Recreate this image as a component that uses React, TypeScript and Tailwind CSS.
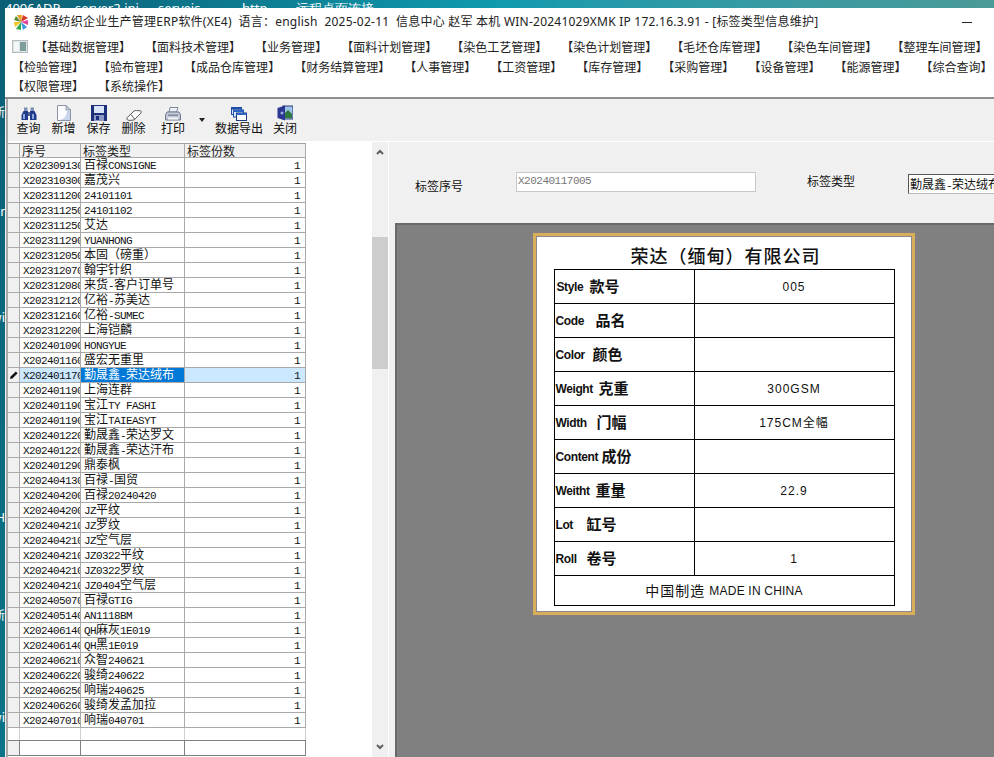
const CJK = '"Noto Sans CJK SC", sans-serif';

const rows: [string, string][] = [
  ["X202309130", "百禄CONSIGNE"],
  ["X202310300", "嘉茂兴"],
  ["X202311200", "24101101"],
  ["X202311250", "24101102"],
  ["X202311250", "艾达"],
  ["X202311290", "YUANHONG"],
  ["X202312050", "本固（磅重）"],
  ["X202312070", "翰宇针织"],
  ["X202312080", "来货-客户订单号"],
  ["X202312120", "亿裕-苏美达"],
  ["X202312160", "亿裕-SUMEC"],
  ["X202312200", "上海铠麟"],
  ["X202401090", "HONGYUE"],
  ["X202401160", "盛宏无重里"],
  ["X202401170", "勤晟鑫-荣达绒布"],
  ["X202401190", "上海连群"],
  ["X202401190", "宝江TY FASHI"],
  ["X202401190", "宝江TAIEASYT"],
  ["X202401220", "勤晟鑫-荣达罗文"],
  ["X202401220", "勤晟鑫-荣达汗布"],
  ["X202401290", "鼎泰枫"],
  ["X202404130", "百禄-国贸"],
  ["X202404200", "百禄20240420"],
  ["X202404200", "JZ平纹"],
  ["X202404210", "JZ罗纹"],
  ["X202404210", "JZ空气层"],
  ["X202404210", "JZ0322平纹"],
  ["X202404210", "JZ0322罗纹"],
  ["X202404210", "JZ0404空气层"],
  ["X202405070", "百禄GTIG"],
  ["X202405140", "AN1118BM"],
  ["X202406140", "QH麻灰1E019"],
  ["X202406140", "QH黑1E019"],
  ["X202406210", "众智240621"],
  ["X202406220", "骏绮240622"],
  ["X202406250", "响瑞240625"],
  ["X202406260", "骏绮发孟加拉"],
  ["X202407010", "响瑞040701"],
];

const menus = [
  "基础数据管理", "面料技术管理", "业务管理", "面料计划管理", "染色工艺管理", "染色计划管理",
  "毛坯仓库管理", "染色车间管理", "整理车间管理", "检验管理", "验布管理", "成品仓库管理",
  "财务结算管理", "人事管理", "工资管理", "库存管理", "采购管理", "设备管理", "能源管理",
  "综合查询", "权限管理", "系统操作",
];

const labelRows = [
  { en: "Style", cn: "款号", value: "005", w: "w-[34px] pl-px" },
  { en: "Code", cn: "品名", value: "", w: "w-[40px]" },
  { en: "Color", cn: "颜色", value: "", w: "w-[37px]" },
  { en: "Weight", cn: "克重", value: "300GSM", w: "w-[43px]" },
  { en: "Width", cn: "门幅", value: "175CM全幅", w: "w-[41px]" },
  { en: "Content", cn: "成份", value: "", w: "w-[46px]" },
  { en: "Weitht", cn: "重量", value: "22.9", w: "w-[40px]" },
  { en: "Lot", cn: "缸号", value: "", w: "w-[31px]" },
  { en: "Roll", cn: "卷号", value: "1", w: "w-[31px]" },
];

// grid text: SimSun look, half-width latin next to full-width hanzi
function Mixed({ text }: { text: string }) {
  const runs = text.match(/[\x00-\x7f]+|[^\x00-\x7f]+/g) ?? [];
  return (
    <>
      {runs.map((r, i) =>
        /^[\x00-\x7f]/.test(r) ? (
          <span key={i} className="font-['Liberation_Mono',monospace] text-[11px] tracking-[-0.6px]">{r}</span>
        ) : (
          <span key={i}>{r}</span>
        )
      )}
    </>
  );
}

function Logo() {
  return (
    <svg width="16" height="17" viewBox="0 0 16 17">
      <path d="M8 8 L4 1 L9 1 Z" fill="#e8a020" />
      <path d="M8 8 L10 1 L15 4 Z" fill="#d83a2a" />
      <path d="M8 8 L15 6 L15 11 Z" fill="#e0459a" />
      <path d="M8 8 L14 13 L10 16 Z" fill="#3a9ad8" />
      <path d="M8 8 L8 16 L3 15 Z" fill="#2fa84a" />
      <path d="M8 8 L2 13 L1 8 Z" fill="#f0c820" />
      <path d="M8 8 L1 6 L3 2 Z" fill="#5a8a30" />
    </svg>
  );
}

function MenuIcon() {
  return (
    <svg width="16" height="13" viewBox="0 0 16 13">
      <rect x="0.5" y="0.5" width="15" height="12" fill="#dfe6e6" stroke="#b4bebe" />
      <rect x="2" y="2" width="5" height="9" fill="#f4f8f8" />
      <rect x="8" y="2" width="6" height="9" fill="#7d9e9a" />
    </svg>
  );
}

function Binoculars() {
  return (
    <svg width="16" height="14" viewBox="0 0 16 14">
      <rect x="3" y="0.5" width="3.5" height="4" fill="#7d8fb5" />
      <rect x="9.5" y="0.5" width="3.5" height="4" fill="#7d8fb5" />
      <path d="M2.5 4 H7 V13 H0.5 V8 Z" fill="#1f3a8a" />
      <path d="M9 4 H13.5 L15.5 8 V13 H9 Z" fill="#1f3a8a" />
      <rect x="7" y="5" width="2" height="4" fill="#54658f" />
      <rect x="2" y="7" width="2" height="5" fill="#8fa6dd" />
      <rect x="11" y="7" width="2" height="5" fill="#8fa6dd" />
    </svg>
  );
}

function Doc() {
  return (
    <svg width="14" height="16" viewBox="0 0 14 16">
      <path d="M0.5 0.5 H9 L13.5 5 V15.5 H0.5 Z" fill="#fbfcff" stroke="#8a94a6" />
      <path d="M9 0.5 V5 H13.5 Z" fill="#d5dae8" stroke="#8a94a6" />
      <path d="M10 6 H13 V15 H3 Q10 13 10 6 Z" fill="#c9d3ea" />
    </svg>
  );
}

function Floppy() {
  return (
    <svg width="16" height="16" viewBox="0 0 16 16">
      <rect x="0" y="0" width="16" height="16" fill="#1c2f7a" />
      <rect x="3" y="1" width="10" height="7" fill="#dbe4f6" />
      <rect x="3" y="10" width="10" height="6" fill="#8d99c4" />
      <rect x="5" y="11" width="3" height="4" fill="#1c2f7a" />
    </svg>
  );
}

function Eraser() {
  return (
    <svg width="16" height="11" viewBox="0 0 16 11">
      <path d="M0.8 8 L8 1 Q9 0.3 10.5 0.6 L14.6 0.8 Q15.6 1.6 15 3 L8 10 L3 10.4 Q0.4 10 0.8 8 Z" fill="#fff" stroke="#5a5a5a" />
      <path d="M5 4.5 L8.5 9" stroke="#5a5a5a" fill="none" />
    </svg>
  );
}

function Printer() {
  return (
    <svg width="16" height="14" viewBox="0 0 16 14">
      <path d="M5 0.5 H13 L11.5 5 H4 Z" fill="#eef1f6" stroke="#7f8aa0" />
      <path d="M2 5 H14 L15.5 8 V13 H0.5 V8 Z" fill="#c3cad6" stroke="#6f7a90" />
      <rect x="3" y="7.5" width="10" height="1.5" fill="#7f8aa0" />
      <rect x="3" y="10.5" width="10" height="2" fill="#f4f6fa" />
    </svg>
  );
}

function ExportIcon() {
  return (
    <svg width="16" height="14" viewBox="0 0 16 14">
      <rect x="0.5" y="0.5" width="10" height="7" fill="#dbe8fb" stroke="#1f4fa8" />
      <rect x="0.5" y="0.5" width="10" height="2" fill="#1f4fa8" />
      <rect x="2.5" y="3" width="10" height="7" fill="#dbe8fb" stroke="#1f4fa8" />
      <rect x="2.5" y="3" width="10" height="2" fill="#2a64c8" />
      <rect x="5.5" y="6" width="10" height="7.5" fill="#fff" stroke="#1f3a7a" />
      <rect x="5.5" y="6" width="10" height="2" fill="#2a64c8" />
    </svg>
  );
}

function DoorIcon() {
  return (
    <svg width="16" height="16" viewBox="0 0 16 16">
      <rect x="6" y="1" width="10" height="13" fill="#9ec3e8" stroke="#2a3a7a" />
      <path d="M7 9 L11 5 L15 9 V13 H7 Z" fill="#2f7a3a" />
      <path d="M0.5 3 L8 0.5 V15.5 L0.5 13 Z" fill="#2a3690" />
      <rect x="3.5" y="7.5" width="3" height="1" fill="#c9d6f5" />
      <rect x="4.5" y="6.5" width="1" height="3" fill="#c9d6f5" />
    </svg>
  );
}

function Pencil() {
  return (
    <svg width="10" height="10" viewBox="0 0 10 10">
      <path d="M1 9 L1.6 6.6 L6.8 1.4 L8.6 3.2 L3.4 8.4 Z" fill="#111" />
    </svg>
  );
}

function ToolButton({ label, icon, w }: { label: string; icon: React.ReactNode; w: string }) {
  return (
    <div className={`flex flex-col items-center ${w}`}>
      <div className="flex h-[16px] items-end">{icon}</div>
      <span className="text-[12px] leading-[14px] text-[#111]">{label}</span>
    </div>
  );
}

function Chevron({ down }: { down?: boolean }) {
  return (
    <svg width="8" height="6" viewBox="0 0 8 6" className={down ? "rotate-180" : ""}>
      <path d="M1 5 L4 2 L7 5" fill="none" stroke="#606060" strokeWidth="2" />
    </svg>
  );
}

const gridCols = "grid grid-cols-[12px_61px_104px_121px]";
const cell = "overflow-hidden whitespace-nowrap border-r border-b border-[#a9a9a9]";

function DataGrid() {
  return (
    <div className="flex h-full w-[298px] flex-col">
      <div className={`${gridCols} h-[15px] border-t border-[#a0a0a0] bg-[#f1f1f1] text-[12px] leading-[13px] text-[#222]`}>
        <div className={cell} />
        <div className={`${cell} pl-[2px]`}>序号</div>
        <div className={`${cell} pl-[2px]`}>标签类型</div>
        <div className={`${cell} pl-[2px]`}>标签份数</div>
      </div>
      {rows.map(([id, name], i) => {
        const selected = i === 14;
        return (
          <div key={i} className={`${gridCols} h-[15px] text-[12px] leading-[11px] text-[#111]`}>
            <div className={`${cell} flex items-center justify-center bg-[#f0f0f0]`}>
              {selected && <Pencil />}
            </div>
            <div className={`${cell} pl-[3px] ${selected ? "bg-[#cce8ff]" : ""}`}>
              <Mixed text={id} />
            </div>
            <div className={`${cell} pl-[3px] ${selected ? "bg-[#0078d7] text-white" : ""}`}>
              <Mixed text={name} />
            </div>
            <div className={`${cell} pr-[5px] text-right ${selected ? "bg-[#cce8ff]" : ""}`}>
              <Mixed text="1" />
            </div>
          </div>
        );
      })}
      <div className={`${gridCols} h-[12px]`}>
        <div className="border-r border-[#d0d0d0]" />
        <div className="border-r border-[#d0d0d0]" />
        <div className="border-r border-[#d0d0d0]" />
        <div className="border-r border-[#d0d0d0]" />
      </div>
      <div className={`${gridCols} h-[16px] border-y border-[#808080]`}>
        <div className="border-r border-[#808080] bg-[#f0f0f0]" />
        <div className="border-r border-[#808080]" />
        <div className="border-r border-[#808080]" />
        <div className="border-r border-[#808080]" />
      </div>
    </div>
  );
}

function LabelCard() {
  return (
    <div className="flex h-[382px] w-[382px] flex-col items-center border-[3px] border-[#d8ae5a] bg-white pt-[6px] shadow-[inset_0_0_0_1px_#8a8a8a]">
      <div className="h-[27px] pl-[3px] text-[18px] font-medium leading-[26px] tracking-[1px] text-[#111]">
        荣达（缅甸）有限公司
      </div>
      <div className="flex w-[341px] flex-col border border-black">
        {labelRows.map((r) => (
          <div key={r.en} className="flex h-[34px] border-b border-black">
            <div className="flex w-[140px] items-center border-r border-black pl-px">
              <span className={`inline-block whitespace-nowrap font-['Liberation_Sans',sans-serif] text-[12px] font-bold tracking-[-0.4px] ${r.w}`}>
                {r.en}
              </span>
              <span className="text-[15px] font-bold">{r.cn}</span>
            </div>
            <div className="flex flex-1 items-center justify-center font-['Liberation_Sans','Noto_Sans_CJK_SC',sans-serif] text-[12px] tracking-[1px]">
              {r.value}
            </div>
          </div>
        ))}
        <div className="flex h-[29px] items-center justify-center font-['Liberation_Sans',sans-serif] text-[12px] tracking-[0.2px] text-[#111]">
          <span className="mr-[4px] font-['Noto_Sans_CJK_SC',sans-serif] text-[14px] tracking-[1px]">中国制造</span>
          MADE IN CHINA
        </div>
      </div>
    </div>
  );
}

export default function App() {
  return (
    <div
      className="flex h-[757px] w-[994px] flex-col overflow-hidden bg-[#0e6f80] text-[#111]"
      style={{ fontFamily: CJK }}
    >
      {/* desktop behind the window, only its edge shows */}
      <div className="flex h-[8px] shrink-0 overflow-hidden whitespace-pre bg-gradient-to-r from-[#0b5f75] via-[#0f9aae] to-[#4a9a98] pl-[5px] font-['Noto_Sans',sans-serif] text-[13px] leading-[17px] text-white">
        <span className="w-[70px]">4096ADP</span>
        <span className="w-[83px]">server2.ini</span>
        <span className="w-[84px]">serveis</span>
        <span className="w-[54px]">http..</span>
        <span>远程桌面连接</span>
      </div>

      <div className="flex min-h-0 flex-1">
        <div className="relative w-[5px] shrink-0 overflow-hidden bg-gradient-to-b from-[#0b5f75] to-[#0b7488] text-[12px] text-white">
          <span className="absolute right-0 top-[95px] whitespace-nowrap">新</span>
          <span className="absolute right-0 top-[194px] whitespace-nowrap">r</span>
          <span className="absolute right-0 top-[300px] whitespace-nowrap">wi</span>
          <span className="absolute right-0 top-[500px] whitespace-nowrap">H</span>
          <span className="absolute right-0 top-[598px] whitespace-nowrap">新</span>
          <span className="absolute right-0 top-[700px] whitespace-nowrap">wi</span>
        </div>

        <div className="flex min-w-0 flex-1 flex-col bg-white">
          {/* title bar */}
          <div className="flex h-[28px] shrink-0 items-center pl-[8px] pr-[22px]">
            <Logo />
            <span className="ml-[5px] flex-1 whitespace-pre font-['Noto_Sans','Noto_Sans_CJK_SC',sans-serif] text-[12px] tracking-[0.23px] text-[#222]">
              翰通纺织企业生产管理ERP软件(XE4)  语言：english  2025-02-11  信息中心 赵军 本机 WIN-20241029XMK IP 172.16.3.91 - [标签类型信息维护]
            </span>
            <div className="h-px w-[10px] bg-[#222]" />
          </div>

          {/* menu */}
          <div className="flex h-[61px] shrink-0 flex-wrap content-start gap-x-[14px] pl-[7px] pt-[1px] text-[12px] leading-[19.5px] text-[#222]">
            <div className="mr-[-7px] flex h-[19.5px] w-[16px] items-center">
              <MenuIcon />
            </div>
            {menus.map((m) => (
              <span key={m} className="whitespace-nowrap">【{m}】</span>
            ))}
          </div>

          {/* mdi child */}
          <div className="flex min-h-0 flex-1 flex-col border-t-2 border-[#8f8f8f] bg-[#f0f0f0] pl-px">
            <div className="flex min-h-0 flex-1 flex-col border-l-2 border-[#a8a8a8]">
              <div className="flex h-[42px] shrink-0 items-start pl-[3px] pt-[6px]">
                <ToolButton w="w-[35px]" label="查询" icon={<Binoculars />} />
                <ToolButton w="w-[35px]" label="新增" icon={<Doc />} />
                <ToolButton w="w-[35px]" label="保存" icon={<Floppy />} />
                <ToolButton w="w-[35px]" label="删除" icon={<Eraser />} />
                <ToolButton w="w-[44px]" label="打印" icon={<Printer />} />
                <div className="flex w-[14px] justify-center pt-[13px]">
                  <div className="h-0 w-0 border-x-[3px] border-t-[4px] border-x-transparent border-t-[#222]" />
                </div>
                <ToolButton w="w-[60px]" label="数据导出" icon={<ExportIcon />} />
                <ToolButton w="w-[32px]" label="关闭" icon={<DoorIcon />} />
              </div>

              <div className="flex min-h-0 flex-1 border-t border-white">
                {/* left list */}
                <div className="flex w-[364px] shrink-0 bg-white pt-px">
                  <DataGrid />
                </div>
                <div className="flex w-[16px] shrink-0 flex-col bg-[#f0f0f0]">
                  <div className="flex h-[17px] shrink-0 items-center justify-center pt-[3px]"><Chevron /></div>
                  <div className="h-[78px] shrink-0" />
                  <div className="h-[132px] shrink-0 bg-[#cdcdcd]" />
                  <div className="flex-1" />
                  <div className="flex h-[17px] shrink-0 items-center justify-center pb-[3px]"><Chevron down /></div>
                </div>

                {/* right form */}
                <div className="flex min-w-0 flex-1 flex-col border-l border-white">
                  <div className="relative flex h-[81px] shrink-0 pl-[26px] text-[12px]">
                    <span className="mt-[35px] w-[101px] shrink-0 leading-[18px]">标签序号</span>
                    <div className="mt-[30px] h-[20px] w-[240px] shrink-0 border border-[#c8c8c8] bg-white pl-[1px] font-['Liberation_Mono',monospace] text-[11px] leading-[16px] tracking-[-0.5px] text-[#777]">
                      X20240117005
                    </div>
                    <span className="ml-[51px] mt-[30px] w-[101px] shrink-0 leading-[18px]">标签类型</span>
                    <div className="mt-[32px] h-[20px] w-[120px] shrink-0 overflow-hidden whitespace-nowrap border border-[#555] border-b-[#bbb] bg-white pl-[1px] leading-[17px]">
                      <Mixed text="勤晟鑫-荣达绒布" />
                    </div>
                  </div>
                  <div className="ml-[6px] flex min-h-0 flex-1 justify-start border-l-2 border-t-2 border-[#696969] bg-[#808080] pl-[136px] pt-[8px]">
                    <LabelCard />
                  </div>
                </div>
              </div>
            </div>
          </div>
        </div>
      </div>
    </div>
  );
}
